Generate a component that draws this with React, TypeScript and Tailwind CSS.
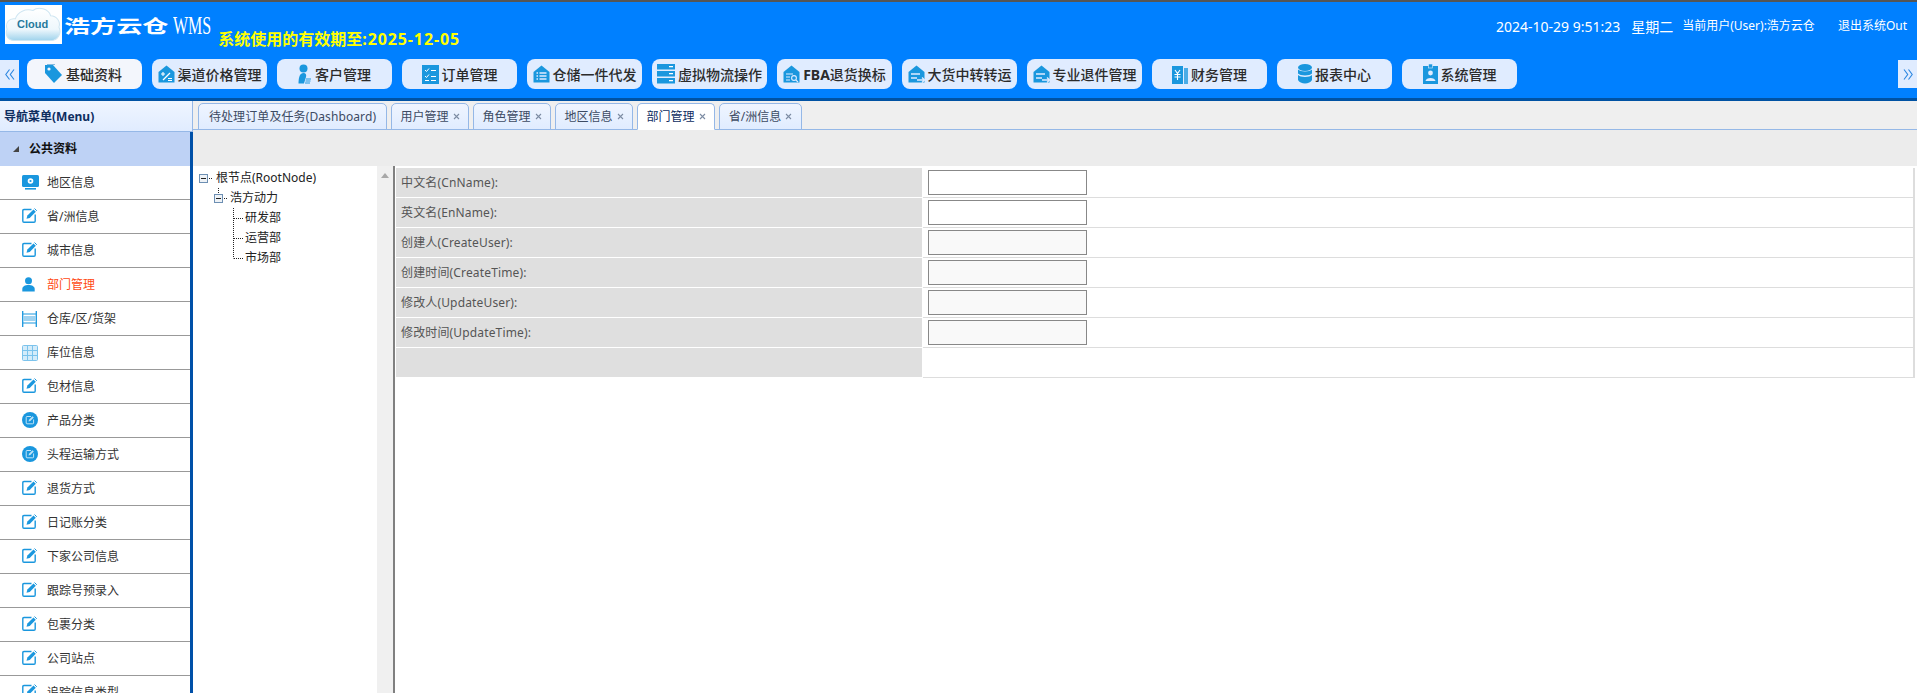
import React from 'react';

const BLUE = '#1a97de';

// ---- top nav icons ----
function TagIcon() {
    return (
        <svg width="19" height="20" viewBox="0 0 19 20">
            <path d="M1 3 L1 1 L9 1 L18 11 L10 19 L1 9 Z" fill={BLUE} />
            <path d="M3 0 L11 0" stroke="#1a7fc0" strokeWidth="1" />
            <circle cx="5" cy="5" r="1.6" fill="#f3f6fc" />
        </svg>
    );
}

function HouseShell({ children }: { children: React.ReactNode }) {
    return (
        <svg width="17" height="18" viewBox="0 0 17 18">
            <path d="M0.5 7 L8.5 0.5 L16.5 7 L16.5 17.5 L0.5 17.5 Z" fill={BLUE} />
            {children}
        </svg>
    );
}

function PercentHouse() {
    return (
        <HouseShell>
            <path d="M5 15 L12 8" stroke="#fff" strokeWidth="1.3" />
            <path d="M3 9 H7 M5 7 V11 M10 13.5 L14 13.5 M10 15.5 L14 15.5" stroke="#fff" strokeWidth="1.1" />
        </HouseShell>
    );
}

function ListHouse() {
    return (
        <HouseShell>
            <path d="M3.5 8 H5 M3.5 11 H5 M3.5 14 H5 M6.5 8 H13.5 M6.5 11 H13.5 M6.5 14 H13.5" stroke="#e0ecff" strokeWidth="1.4" />
        </HouseShell>
    );
}

function SearchHouse() {
    return (
        <HouseShell>
            <path d="M3 9 H10 M3 12 H7 M3 15 H7" stroke="#e0ecff" strokeWidth="1.2" />
            <circle cx="11" cy="13" r="2.4" fill={BLUE} stroke="#e0ecff" strokeWidth="1.1" />
            <path d="M12.8 14.8 L15 17" stroke="#e0ecff" strokeWidth="1.2" />
        </HouseShell>
    );
}

function TruckHouse() {
    return (
        <HouseShell>
            <path d="M3 9 H12 M3 13 H9" stroke="#e0ecff" strokeWidth="1.4" />
            <path d="M9 15 H16 M14 12.5 L16.5 15 L14 17.5" stroke="#e0ecff" strokeWidth="1.3" fill="none" />
        </HouseShell>
    );
}

function UserLines() {
    return (
        <svg width="14" height="20" viewBox="0 0 14 20">
            <circle cx="5.5" cy="4.5" r="4" fill={BLUE} />
            <path d="M0.5 19.5 C0.5 13 2 9 5.5 9 C8 9 8.5 11 8 13 L6 19.5 Z" fill={BLUE} />
            <path d="M8 15 H13 M7.5 17 H12.5 M7 19 H12" stroke={BLUE} strokeWidth="1" />
        </svg>
    );
}

function CheckSquare() {
    return (
        <svg width="17" height="19" viewBox="0 0 17 19">
            <rect width="17" height="19" fill={BLUE} />
            <path d="M3 5 L4.5 6.5 L7 3.5 M3 11 L4.5 12.5 L7 9.5" stroke="#fff" strokeWidth="1" fill="none" />
            <path d="M9 5.5 H14 M9 11.5 H14 M3 15.5 H7 M9 15.5 H14" stroke="#fff" strokeWidth="1" />
        </svg>
    );
}

function ServerIcon() {
    return (
        <svg width="18" height="20" viewBox="0 0 18 20">
            <rect y="0" width="18" height="5.5" fill={BLUE} />
            <rect y="7" width="18" height="5.5" fill={BLUE} />
            <rect y="14" width="18" height="5.5" fill={BLUE} />
            <path d="M12 2.7 H16 M12 9.7 H16 M12 16.7 H16" stroke="#fff" strokeWidth="1.2" />
        </svg>
    );
}

function YuanIcon() {
    return (
        <svg width="16" height="19" viewBox="0 0 16 19">
            <rect x="0" y="1" width="11" height="18" fill={BLUE} />
            <path d="M12 3 H16 V19 H12 Z" fill={BLUE} opacity="0.75" />
            <path d="M3 5 L5.5 8.5 L8 5 M2.5 9.5 H8.5 M2.5 12 H8.5 M5.5 8.5 V15" stroke="#fff" strokeWidth="1.1" fill="none" />
        </svg>
    );
}

function DbIcon() {
    return (
        <svg width="14" height="20" viewBox="0 0 14 20">
            <ellipse cx="7" cy="3.5" rx="7" ry="3.5" fill={BLUE} />
            <path d="M0 5.5 C2 8 12 8 14 5.5 V9.5 C12 12 2 12 0 9.5 Z" fill={BLUE} />
            <path d="M0 11 C2 13.5 12 13.5 14 11 V16 C12 20.5 2 20.5 0 16 Z" fill={BLUE} />
        </svg>
    );
}

function BadgeIcon() {
    return (
        <svg width="15" height="20" viewBox="0 0 15 20">
            <rect y="2" width="15" height="18" fill={BLUE} />
            <rect x="5.5" y="0" width="4" height="4" fill={BLUE} stroke="#e0ecff" strokeWidth="0.6" />
            <circle cx="7.5" cy="9" r="2.4" fill="#e0ecff" />
            <path d="M2.5 17 C3 13 12 13 12.5 17 Z" fill="#e0ecff" />
        </svg>
    );
}

function DoubleChevron({ flip }: { flip?: boolean }) {
    return (
        <svg width="10" height="11" viewBox="0 0 10 11" className={flip ? 'rotate-180' : ''}>
            <path d="M4.5 0.5 L0.8 5.5 L4.5 10.5 M9 0.5 L5.3 5.5 L9 10.5" fill="none" stroke="#2a86e0" strokeWidth="1.1" />
        </svg>
    );
}

// ---- sidebar icons ----
function MonitorGear() {
    return (
        <svg width="17" height="15" viewBox="0 0 17 15">
            <rect width="17" height="12" rx="1.5" fill={BLUE} />
            <rect x="3" y="13" width="11" height="1.6" fill={BLUE} />
            <circle cx="8.5" cy="6" r="2.8" fill="#fff" />
            <circle cx="8.5" cy="6" r="1.1" fill={BLUE} />
        </svg>
    );
}

function EditIcon() {
    return (
        <svg width="15" height="15" viewBox="0 0 15 15" className="-translate-y-[1px]">
            <path d="M9.5 1.5 H2 Q0.8 1.5 0.8 2.7 V13 Q0.8 14.2 2 14.2 H12 Q13.2 14.2 13.2 13 V6.5" fill="none" stroke={BLUE} strokeWidth="1.4" />
            <path d="M4.5 10.8 L5.4 7.6 L11.5 1.5 L13.8 3.8 L7.7 9.9 Z" fill={BLUE} />
            <path d="M12.5 0.5 L14.8 2.8" stroke={BLUE} strokeWidth="1" />
        </svg>
    );
}

function UserIcon() {
    return (
        <svg width="13" height="15" viewBox="0 0 13 15">
            <circle cx="6.5" cy="3.7" r="3.5" fill={BLUE} />
            <path d="M0.3 14.5 V12 C0.3 9.5 3 8 6.5 8 C10 8 12.7 9.5 12.7 12 V14.5 Z" fill={BLUE} />
        </svg>
    );
}

function ShelfIcon() {
    return (
        <svg width="15" height="16" viewBox="0 0 15 16">
            <path d="M0.7 0 V16 M14.3 0 V16" stroke={BLUE} strokeWidth="1.3" />
            <path d="M1 3 H14 M1 12 H14" stroke={BLUE} strokeWidth="1.1" />
            <rect x="1" y="5" width="13" height="5" fill="#9fd2f0" />
        </svg>
    );
}

function GridIcon() {
    return (
        <svg width="16" height="16" viewBox="0 0 16 16">
            <rect x="0.5" y="0.5" width="15" height="15" rx="1" fill="#d4ecfa" stroke="#7cc3ec" />
            <path d="M5.5 0.5 V15.5 M10.5 0.5 V15.5 M0.5 5.5 H15.5 M0.5 10.5 H15.5" stroke="#7cc3ec" />
        </svg>
    );
}

function CircleEdit() {
    return (
        <svg width="16" height="16" viewBox="0 0 16 16" className="-translate-y-[1px]">
            <circle cx="8" cy="8" r="8" fill={BLUE} />
            <path d="M9 4.5 H5 Q4.2 4.5 4.2 5.3 V11 Q4.2 11.8 5 11.8 H10.8 Q11.6 11.8 11.6 11 V7.5" fill="none" stroke="#bfe3f7" strokeWidth="1" />
            <path d="M6.5 9.6 L7 7.8 L10.5 4.3 L11.8 5.6 L8.3 9.1 Z" fill="#bfe3f7" />
        </svg>
    );
}

const navItems: { label: React.ReactNode; key: string; icon: React.ReactNode }[] = [
    { key: 'base', label: '基础资料', icon: <TagIcon /> },
    { key: 'price', label: '渠道价格管理', icon: <PercentHouse /> },
    { key: 'customer', label: '客户管理', icon: <UserLines /> },
    { key: 'order', label: '订单管理', icon: <CheckSquare /> },
    { key: 'storage', label: '仓储一件代发', icon: <ListHouse /> },
    { key: 'virtual', label: '虚拟物流操作', icon: <ServerIcon /> },
    { key: 'fba', label: <><span className="font-bold">FBA</span>退货换标</>, icon: <SearchHouse /> },
    { key: 'transfer', label: '大货中转转运', icon: <TruckHouse /> },
    { key: 'returns', label: '专业退件管理', icon: <TruckHouse /> },
    { key: 'finance', label: '财务管理', icon: <YuanIcon /> },
    { key: 'report', label: '报表中心', icon: <DbIcon /> },
    { key: 'system', label: '系统管理', icon: <BadgeIcon /> },
];

const menuItems: { label: string; icon: React.ReactNode; active?: boolean }[] = [
    { label: '地区信息', icon: <MonitorGear /> },
    { label: '省/洲信息', icon: <EditIcon /> },
    { label: '城市信息', icon: <EditIcon /> },
    { label: '部门管理', icon: <UserIcon />, active: true },
    { label: '仓库/区/货架', icon: <ShelfIcon /> },
    { label: '库位信息', icon: <GridIcon /> },
    { label: '包材信息', icon: <EditIcon /> },
    { label: '产品分类', icon: <CircleEdit /> },
    { label: '头程运输方式', icon: <CircleEdit /> },
    { label: '退货方式', icon: <EditIcon /> },
    { label: '日记账分类', icon: <EditIcon /> },
    { label: '下家公司信息', icon: <EditIcon /> },
    { label: '跟踪号预录入', icon: <EditIcon /> },
    { label: '包裹分类', icon: <EditIcon /> },
    { label: '公司站点', icon: <EditIcon /> },
    { label: '追踪信息类型', icon: <EditIcon /> },
];

const tabs = [
    { label: '待处理订单及任务(Dashboard)', width: 'w-[189px]', closable: false },
    { label: '用户管理', width: 'w-[78px]', closable: true },
    { label: '角色管理', width: 'w-[78px]', closable: true },
    { label: '地区信息', width: 'w-[78px]', closable: true },
    { label: '部门管理', width: 'w-[78px]', closable: true, active: true },
    { label: '省/洲信息', width: 'w-[83px]', closable: true },
];

const formRows = [
    { label: '中文名(CnName):', input: true },
    { label: '英文名(EnName):', input: true },
    { label: '创建人(CreateUser):', input: true, readOnly: true },
    { label: '创建时间(CreateTime):', input: true, readOnly: true },
    { label: '修改人(UpdateUser):', input: true, readOnly: true },
    { label: '修改时间(UpdateTime):', input: true, readOnly: true },
    { label: '', input: false },
];

function CloudLogo() {
    return (
        <div className="relative w-[57px] h-[39px] bg-white flex items-center justify-center">
            <svg width="57" height="37" viewBox="0 0 55 35">
                <defs>
                    <linearGradient id="cloudFill" x1="0" y1="0" x2="0" y2="1">
                        <stop offset="0" stopColor="#ffffff" />
                        <stop offset="0.65" stopColor="#eef7fc" />
                        <stop offset="1" stopColor="#9fd3ec" />
                    </linearGradient>
                </defs>
                <path
                    d="M9 33 C2 33 0 27 2 22 C0 16 4 11 10 12 C12 5 20 2 27 4 C32 0 42 2 44 9 C50 9 54 15 52 20 C55 26 51 33 44 33 Z"
                    fill="url(#cloudFill)"
                    stroke="#cfe6f2"
                />
            </svg>
            <span className="absolute left-[12px] top-[13px] text-[11px] leading-[13px] font-bold text-[#27799c] font-['Liberation_Sans',sans-serif]">Cloud</span>
        </div>
    );
}

function Expander() {
    return (
        <>
            <rect x="0.5" y="0.5" width="8" height="8" fill="#eef2f6" stroke="#6d8fb3" />
            <path d="M2 4.5 H7" stroke="#222" strokeWidth="1" />
        </>
    );
}

function Tree() {
    return (
        <div className="w-[184px] pt-[2px] text-[12px] leading-[20px] text-[#222]">
            <div className="flex h-[20px] items-center pl-[6px]">
                <svg width="17" height="20" viewBox="0 0 17 20" className="shrink-0">
                    <g transform="translate(0,6)"><Expander /></g>
                    <path d="M10 10.5 H13" stroke="#222" strokeDasharray="1 1" />
                </svg>
                <span>根节点(RootNode)</span>
            </div>
            <div className="flex h-[20px] items-center pl-[21px]">
                <svg width="16" height="20" viewBox="0 0 16 20" className="shrink-0">
                    <path d="M4.5 0 V5" stroke="#222" strokeDasharray="1 1" />
                    <g transform="translate(0,6)"><Expander /></g>
                    <path d="M10 10.5 H13" stroke="#222" strokeDasharray="1 1" />
                </svg>
                <span>浩方动力</span>
            </div>
            {['研发部', '运营部', '市场部'].map((name, i) => (
                <div key={name} className="flex h-[20px] items-center pl-[39px]">
                    <svg width="13" height="20" viewBox="0 0 13 20" className="shrink-0">
                        <path d={i === 2 ? 'M1.5 0 V10.5' : 'M1.5 0 V20'} stroke="#222" strokeDasharray="1 1" />
                        <path d="M2 10.5 H11" stroke="#222" strokeDasharray="1 1" />
                    </svg>
                    <span>{name}</span>
                </div>
            ))}
        </div>
    );
}

export default function App() {
    return (
        <div className="w-[1917px] h-[693px] overflow-hidden bg-white flex flex-col font-['Noto_Sans','Noto_Sans_CJK_SC',sans-serif]">
            {/* Header */}
            <div className="h-[101px] shrink-0 bg-[#0080ff] border-t-2 border-t-[#555] border-b-[3px] border-b-[#0052a3]">
                <div className="h-[57px] flex items-start">
                    <div className="ml-[5px] mt-[3px]">
                        <CloudLogo />
                    </div>
                    <div className="ml-[2px] mt-[11px] flex items-center text-white h-[26px]">
                        <span className="w-[109px] text-[18px] leading-[26px] font-bold whitespace-nowrap scale-x-[1.45] origin-left">浩方云仓</span>
                        <span className="text-[16px] leading-[26px] font-['Liberation_Serif',serif] scale-y-[1.6]">WMS</span>
                    </div>
                    <div className="ml-[7px] mt-[25px] text-[16px] leading-[24px] font-bold text-[#ffff00] whitespace-nowrap">
                        系统使用的有效期至<span className="tracking-[0.9px]">:2025-12-05</span>
                    </div>
                    <div className="ml-auto mr-[10px] mt-[14px] flex items-center text-white h-[20px] whitespace-nowrap">
                        <span className="text-[14px]">2024-10-29 9:51:23</span>
                        <span className="ml-[11px] text-[14px]">星期二</span>
                        <span className="ml-[9px] text-[12px]">当前用户(User):浩方云仓</span>
                        <span className="ml-[23px] text-[12px]">退出系统Out</span>
                    </div>
                </div>
                <div className="h-[30px] flex items-center">
                    <div className="w-[19px] h-[28px] bg-[#e0ecff] flex items-center justify-center">
                        <DoubleChevron />
                    </div>
                    <div className="ml-[8px] flex gap-[10px]">
                        {navItems.map((item, i) => (
                            <div
                                key={item.key}
                                className={`w-[115px] h-[30px] rounded-[8px] flex items-center justify-center gap-[3px] text-[14px] font-medium text-[#2b2b2b] whitespace-nowrap ${i === 0 ? 'bg-[#f3f6fc] pr-[3px]' : 'bg-[#e0ecff]'}`}
                            >
                                <span className="shrink-0 flex items-center">{item.icon}</span>
                                <span>{item.label}</span>
                            </div>
                        ))}
                    </div>
                    <div className="ml-auto w-[19px] h-[28px] bg-[#e0ecff] flex items-center justify-center">
                        <DoubleChevron flip />
                    </div>
                </div>
            </div>

            {/* Body */}
            <div className="flex-1 flex min-h-0">
                {/* Sidebar */}
                <div className="w-[193px] shrink-0 flex flex-col min-h-0">
                    <div className="h-[31px] shrink-0 pt-[1px] bg-gradient-to-b from-[#eff5ff] to-[#e0ecff] border-b border-r border-[#95b8e7] flex items-center pl-[4px] text-[12px] font-bold text-[#0e2d5f]">
                        导航菜单(Menu)
                    </div>
                    <div className="flex-1 min-h-0 overflow-hidden border-r-[3px] border-r-[#0050a8]">
                        <div className="h-[34px] bg-[#bed2f5] flex items-center text-[12px] font-bold text-[#111]">
                            <svg width="6" height="6" viewBox="0 0 6 6" className="ml-[13px] mr-[10px]">
                                <path d="M0 6 H6 V0 Z" fill="#444" />
                            </svg>
                            公共资料
                        </div>
                        {menuItems.map((item) => (
                            <div key={item.label} className="h-[34px] border-b border-[#999] flex items-center">
                                <span className="w-[47px] shrink-0 pl-[22px] flex items-center">{item.icon}</span>
                                <span className={`text-[12px] whitespace-nowrap ${item.active ? 'text-[#ff4a14]' : 'text-[#333]'}`}>{item.label}</span>
                            </div>
                        ))}
                    </div>
                </div>

                {/* Main */}
                <div className="flex-1 min-w-0 flex flex-col">
                    <div className="h-[29px] shrink-0 bg-[#efefef] border-b border-[#95b8e7] pl-[5px] pt-[2px] flex gap-[4px]">
                        {tabs.map((tab) => (
                            <div
                                key={tab.label}
                                className={`${tab.width} h-[27px] rounded-t-[5px] border border-[#95b8e7] flex items-center justify-center gap-[4px] text-[12px] whitespace-nowrap ${tab.active ? 'bg-white border-b-white text-[#0e2d5f]' : 'bg-gradient-to-b from-[#eff5ff] to-[#e0ecff] text-[#3d4b63]'}`}
                            >
                                <span className={tab.closable ? '' : 'tracking-[0.1px]'}>{tab.label}</span>
                                {tab.closable && (
                                    <svg width="7" height="7" viewBox="0 0 7 7">
                                        <path d="M1 1 L6 6 M6 1 L1 6" stroke="#7d8ca3" strokeWidth="1.1" />
                                    </svg>
                                )}
                            </div>
                        ))}
                    </div>
                    <div className="h-[36px] shrink-0 bg-[#ececec]" />
                    <div className="flex-1 flex min-h-0">
                        <Tree />
                        <div className="w-[18px] shrink-0 bg-[#f0f0f0] border-r-2 border-r-[#808080] pt-[7px] flex justify-center">
                            <svg width="8" height="5" viewBox="0 0 8 5" className="mr-[1px]">
                                <path d="M0 5 L4 0 L8 5 Z" fill="#a8a8a8" />
                            </svg>
                        </div>
                        <div className="ml-[1px] flex-1 min-w-0 pt-[2px] pr-[2px] text-[12px] text-[#555]">
                            {formRows.map((row, i) => (
                                <div key={i} className="flex h-[30px]">
                                    <div className="w-[526px] h-[29px] bg-[#dfdfdf] pl-[5px] flex items-center tracking-[0.15px]">{row.label}</div>
                                    <div className="ml-[1px] flex-1 border-b border-b-[#ddd] border-r-2 border-r-[#ddd] pl-[5px] pt-[2px]">
                                        {row.input && (
                                            <input
                                                readOnly
                                                className={`block w-[159px] h-[25px] border border-[#888] ${row.readOnly ? 'bg-[#f9f9f9]' : 'bg-white'}`}
                                            />
                                        )}
                                    </div>
                                </div>
                            ))}
                        </div>
                    </div>
                </div>
            </div>
        </div>
    );
}
